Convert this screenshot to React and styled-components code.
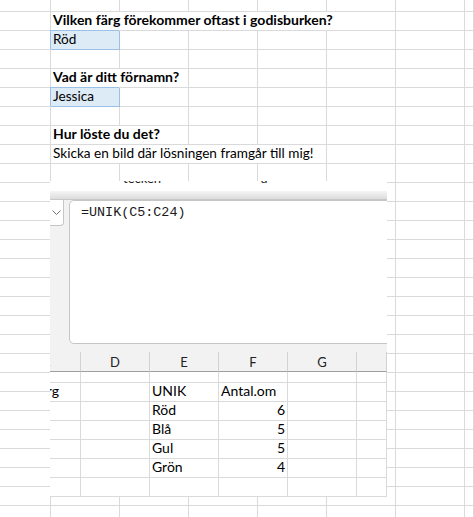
import React from "react";
import styled, { createGlobalStyle, css } from "styled-components";

const GlobalStyle = createGlobalStyle`
  html, body {
    margin: 0;
    padding: 0;
    background: #fff;
  }
  body {
    width: 474px;
    height: 517px;
    overflow: hidden;
    font-family: Lato, "Liberation Sans", sans-serif;
    color: #000;
  }
`;

const Page = styled.div`
  position: relative;
  width: 474px;
  height: 517px;
  overflow: hidden;
`;

const Sheet = styled.div`
  display: grid;
  grid-template-columns: 51px repeat(6, 69px) 1fr;
  grid-template-rows: 12px;
  grid-auto-rows: 19px;
`;

const Cell = styled.div`
  grid-column: span ${(p) => p.$span || 1};
  box-sizing: border-box;
  border-right: 1px solid #dadada;
  border-bottom: 1px solid #dadada;
  display: flex;
  align-items: flex-end;
  padding: 0 0 2px 2px;
  font-size: ${(p) => (p.$bold ? "14px" : "13.6px")};
  line-height: 16px;
  font-weight: ${(p) => (p.$bold ? 700 : 400)};
  white-space: nowrap;
  overflow: hidden;
  ${(p) =>
    p.$picked &&
    css`
      background: #ddebf7;
      border-color: #9bc2e6;
      box-shadow: -1px -1px 0 #9bc2e6;
    `}
`;

/* pasted screenshot of the formula bar and the result table */
const Shot = styled.div`
  position: absolute;
  left: 50px;
  top: 181px;
  width: 337px;
  height: 316px;
  overflow: hidden;
  background: #fff;
  display: flex;
  flex-direction: column;
`;

const CutRow = styled.div`
  height: 10px;
  flex: none;
  overflow: hidden;
  display: flex;
  padding-left: 73px;
  gap: 100px;
  font-size: 13px;
  line-height: 13px;
  color: #222;
`;

const CutText = styled.span`
  margin-top: -9px;
`;

const Bevel = styled.div`
  height: 9px;
  flex: none;
  box-sizing: border-box;
  background: linear-gradient(#f5f5f5, #dcdcdc);
  border-bottom: 1px solid #c8c8c8;
`;

const FormulaArea = styled.div`
  height: 152px;
  flex: none;
  box-sizing: border-box;
  display: flex;
  align-items: flex-start;
  gap: 5px;
  margin-left: -46px;
  margin-right: -20px;
  padding-bottom: 8px;
  background: #f2f2f2;
`;

const NameBox = styled.div`
  width: 60px;
  height: 26px;
  flex: none;
  box-sizing: border-box;
  display: flex;
  align-items: center;
  justify-content: flex-end;
  padding-right: 2px;
  background: #fff;
  border: 1px solid #c6c6c6;
  border-top: none;
  border-radius: 0 0 4px 4px;
`;

const FormulaBox = styled.div`
  flex: 1;
  align-self: stretch;
  box-sizing: border-box;
  padding: 4px 11px;
  background: #fff;
  border: 1px solid #c6c6c6;
  border-radius: 5px;
  font-family: "Liberation Mono", "DejaVu Sans Mono", monospace;
  font-size: 13.4px;
  line-height: 16px;
  color: #1a1a1a;
`;

const Columns = styled.div`
  display: grid;
  grid-template-columns: repeat(5, 69px) 1fr;
  margin-left: -38px;
  flex: none;
`;

const HeadCell = styled.div`
  height: 20px;
  box-sizing: border-box;
  display: flex;
  align-items: center;
  justify-content: center;
  background: #f2f2f2;
  border-right: 1px solid #d2d2d2;
  border-bottom: 1px solid #9f9f9f;
  font-size: 13px;
  color: ${(p) => (p.$active ? "#2b6fc4" : "#222")};
`;

const Table = styled(Columns)`
  grid-template-rows: 11px;
  grid-auto-rows: 19px;
`;

const DataCell = styled.div`
  box-sizing: border-box;
  display: flex;
  align-items: flex-end;
  justify-content: ${(p) =>
    p.$align === "right" ? "flex-end" : p.$align === "center" ? "center" : "flex-start"};
  padding: 0 2px 2px;
  border-right: 1px solid #dadada;
  border-bottom: 1px solid #dadada;
  font-size: 14px;
  line-height: 16px;
  white-space: nowrap;
`;

const Chevron = () => (
  <svg width="9" height="6" viewBox="0 0 9 6">
    <polyline points="0.5,0.5 4.5,4.5 8.5,0.5" fill="none" stroke="#707070" strokeWidth="1" />
  </svg>
);

const questions = [
  [],
  [{ text: "Vilken färg förekommer oftast i godisburken?", span: 5, bold: true }],
  [{ text: "Röd", picked: true }],
  [],
  [{ text: "Vad är ditt förnamn?", span: 2, bold: true }],
  [{ text: "Jessica", picked: true }],
  [],
  [{ text: "Hur löste du det?", span: 2, bold: true }],
  [{ text: "Skicka en bild där lösningen framgår till mig!", span: 4 }],
];

function buildSheet() {
  const rows = [];
  for (let r = 0; r < 28; r++) {
    const entries = questions[r] || [];
    const cells = [{}];
    let used = 1;
    entries.forEach((e) => {
      cells.push(e);
      used += e.span || 1;
    });
    while (used < 8) {
      cells.push({});
      used++;
    }
    rows.push(cells);
  }
  return rows;
}

const heads = ["C", "D", "E", "F", "G", ""];

const results = [
  ["", "", "", "", "", ""],
  ["Färg", "", "UNIK", "Antal.om", "", ""],
  ["", "", "Röd", 6, "", ""],
  ["", "", "Blå", 5, "", ""],
  ["", "", "Gul", 5, "", ""],
  ["", "", "Grön", 4, "", ""],
  ["", "", "", "", "", ""],
];

export default function App() {
  const sheet = buildSheet();

  return (
    <>
      <GlobalStyle />
      <Page>
        <Sheet>
          {sheet.map((row, r) =>
            row.map((c, i) => (
              <Cell key={r + "-" + i} $span={c.span} $bold={c.bold} $picked={c.picked}>
                {c.text}
              </Cell>
            ))
          )}
        </Sheet>

        <Shot>
          <CutRow>
            <CutText>tecken</CutText>
            <CutText>a</CutText>
          </CutRow>
          <Bevel />
          <FormulaArea>
            <NameBox>
              <Chevron />
            </NameBox>
            <FormulaBox>=UNIK(C5:C24)</FormulaBox>
          </FormulaArea>
          <Columns>
            {heads.map((h, i) => (
              <HeadCell key={i} $active={h === "C"}>
                {h}
              </HeadCell>
            ))}
          </Columns>
          <Table>
            {results.map((row, r) =>
              row.map((v, i) => (
                <DataCell
                  key={r + "-" + i}
                  $align={typeof v === "number" ? "right" : i === 0 ? "center" : "left"}
                >
                  {v}
                </DataCell>
              ))
            )}
          </Table>
        </Shot>
      </Page>
    </>
  );
}
